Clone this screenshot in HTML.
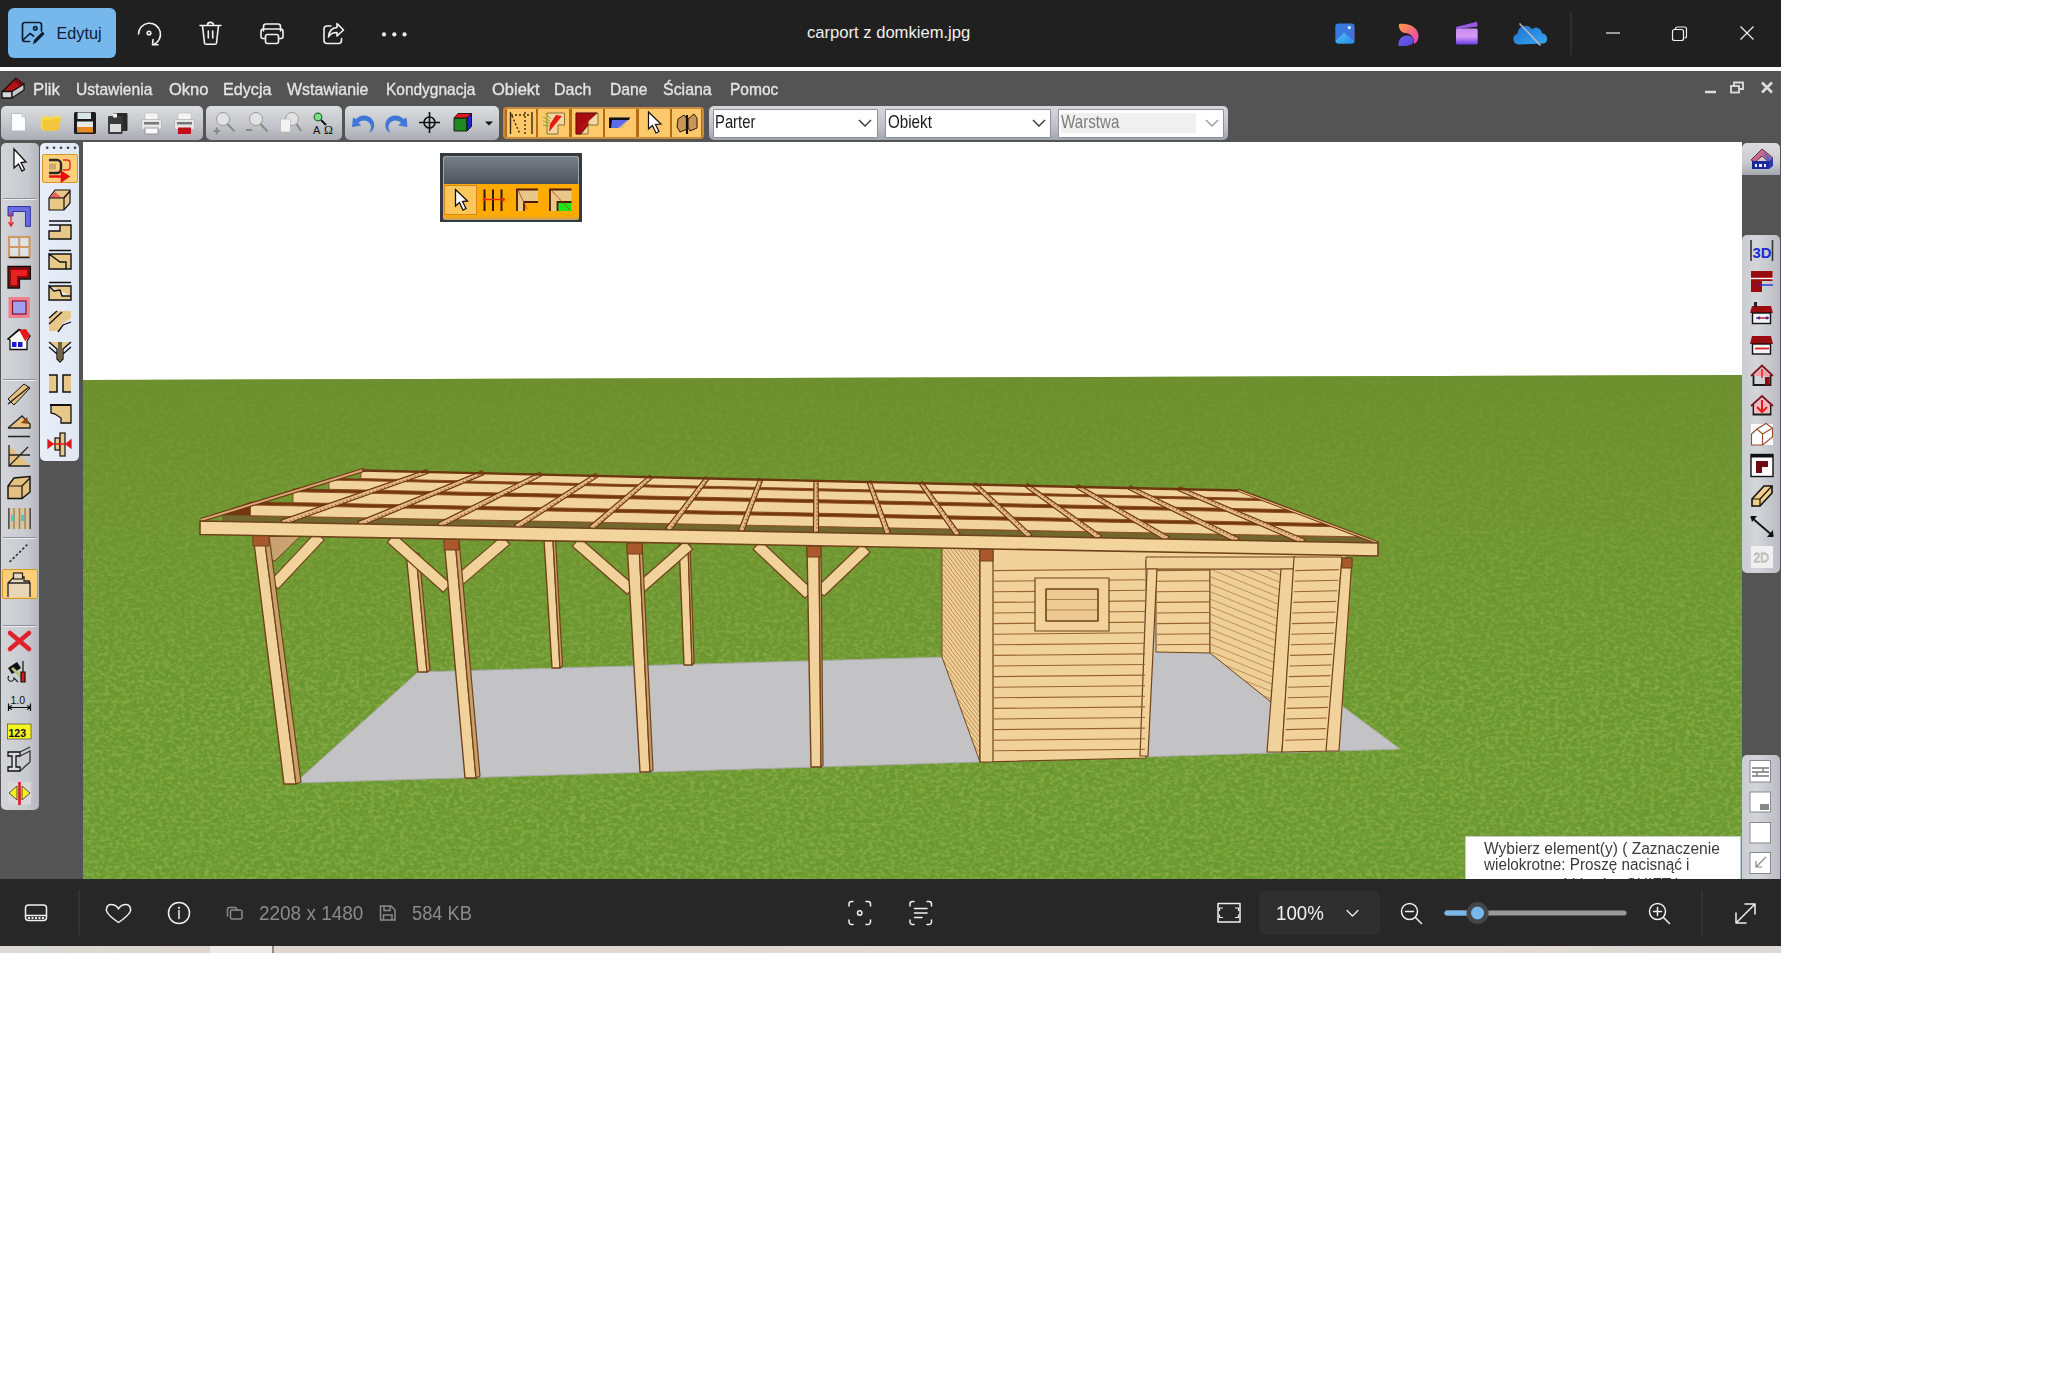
<!DOCTYPE html>
<html><head><meta charset="utf-8">
<style>
*{margin:0;padding:0;box-sizing:border-box}
html,body{width:2048px;height:1374px;overflow:hidden;background:#fff;font-family:"Liberation Sans",sans-serif}
.a{position:absolute}
svg{position:absolute;overflow:visible}
#title{left:0;top:0;width:1781px;height:66.8px;background:#202020}
#menu{left:0;top:71px;width:1781px;height:36px;background:#545454}
#tb{left:0;top:107px;width:1781px;height:35px;background:#545454}
#canvas{left:83px;top:142px;width:1659px;height:737px;background:#fff;overflow:hidden}
#lbar{left:0;top:142px;width:83px;height:737px;background:#545454}
#rbar{left:1742px;top:142px;width:39px;height:737px;background:#545454}
#status{left:0;top:879px;width:1781px;height:67px;background:#272727}
#strip{left:0;top:946px;width:1781px;height:7px;background:linear-gradient(90deg,#dad9d4 0,#ddd6cf 200px,#e3d8cf 600px,#e6dbd2 1200px,#ddd9d6 1781px)}
.mi{position:absolute;top:80px;font-size:15.3px;color:#e6e6e6;white-space:nowrap;letter-spacing:0}
.grp{position:absolute;top:106px;height:34px;border-radius:5px;background:linear-gradient(#dcdde0,#c4c6cb 55%,#a9acb3)}
.combo{position:absolute;top:109px;height:29px;background:#fff;border:1px solid #9a9ea6;font-size:15px;color:#222;padding:5px 0 0 4px;white-space:nowrap}
.col{position:absolute;border-radius:5px}
.st{position:absolute;font-size:18.7px;color:#8c8c8c;top:901px;white-space:nowrap}
</style></head><body>
<!-- ===== Photos title bar ===== -->
<div id="title" class="a"></div>
<div class="a" style="left:8px;top:8px;width:108px;height:50px;border-radius:6px;background:#76b7ec"></div>
<svg style="left:0;top:0" width="1" height="1">
  <g fill="none" stroke="#0c1d2e" stroke-width="1.7" stroke-linejoin="round" stroke-linecap="round">
    <path d="M29.5,41.5 H25 a2.5,2.5 0 0 1 -2.5,-2.5 V25 a2.5,2.5 0 0 1 2.5,-2.5 H39 a2.5,2.5 0 0 1 2.5,2.5 V31"/>
    <path d="M23,40 L30,33.5 L33.5,36"/>
    <circle cx="35.3" cy="28.3" r="1.7"/>
  </g>
  <path d="M33,44.5 L34,40 L41.5,32.5 a1.6,1.6 0 0 1 2.3,2.3 L36.3,42.3 Z" fill="#0c1d2e"/>
</svg>
<div class="a" style="left:56.5px;top:23.5px;font-size:16.2px;color:#0c2035">Edytuj</div>
<svg style="left:0;top:0" width="1" height="1">
  <g fill="none" stroke="#f2f2f2" stroke-width="1.6" stroke-linecap="round" stroke-linejoin="round">
    <path d="M138.5,34 A11,11 0 1 1 153.5,44.5"/>
    <path d="M153,39.5 L152.5,44.8 L158,44.8"/>
    <circle cx="149" cy="33" r="1.8"/>
    <!-- trash -->
    <path d="M200,25.5 H221 M202.5,25.5 L204.5,43 a1.5,1.5 0 0 0 1.5,1.3 H215 a1.5,1.5 0 0 0 1.5,-1.3 L218.5,25.5 M207.5,25 a3,2.6 0 0 1 6,0"/>
    <path d="M208.3,31 V38 M212.7,31 V38"/>
    <!-- printer -->
    <path d="M263.5,31 V26.5 a2.5,2.5 0 0 1 2.5,-2.5 H278 a2.5,2.5 0 0 1 2.5,2.5 V31"/>
    <path d="M264.5,38.5 H263 a2,2 0 0 1 -2,-2 V31.5 a2.5,2.5 0 0 1 2.5,-2.5 H280.5 a2.5,2.5 0 0 1 2.5,2.5 V36.5 a2,2 0 0 1 -2,2 H279.5"/>
    <rect x="265.5" y="34.5" width="13" height="9" rx="2"/>
    <!-- share -->
    <path d="M331,26 H327 a3,3 0 0 0 -3,3 V40.5 a3,3 0 0 0 3,3 H338.5 a3,3 0 0 0 3,-3 V38.5"/>
    <path d="M337,23.5 L343.5,30 L337,36 V32.5 C333,32.5 330,34 328.5,37 C329,31 332.5,27.8 337,27.5 Z"/>
  </g>
  <g fill="#f2f2f2"><circle cx="384" cy="34.4" r="2.1"/><circle cx="394.3" cy="34.4" r="2.1"/><circle cx="404.5" cy="34.4" r="2.1"/></g>
</svg>
<div class="a" style="left:807px;top:23px;font-size:16.6px;color:#f0f0f0;white-space:nowrap">carport z domkiem.jpg</div>
<svg style="left:0;top:0" width="1" height="1">
  <defs>
    <linearGradient id="ph1" x1="0" y1="0" x2="1" y2="1"><stop offset="0" stop-color="#2f7fe0"/><stop offset="1" stop-color="#4f6ad8"/></linearGradient>
    <linearGradient id="ph2" x1="0" y1="0" x2="1" y2="1"><stop offset="0" stop-color="#4cc3f4"/><stop offset="1" stop-color="#2a8ae6"/></linearGradient>
    <linearGradient id="ds1" x1="0" y1="0" x2="1" y2="1"><stop offset="0" stop-color="#ff9a3c"/><stop offset="1" stop-color="#e83cc0"/></linearGradient>
    <linearGradient id="ds2" x1="0" y1="0" x2="1" y2="1"><stop offset="0" stop-color="#7a5cf0"/><stop offset="1" stop-color="#4a4ad8"/></linearGradient>
    <linearGradient id="cc1" x1="0" y1="0" x2="0" y2="1"><stop offset="0" stop-color="#c88bf0"/><stop offset="0.5" stop-color="#d59af5"/><stop offset="1" stop-color="#6a3ee6"/></linearGradient>
    <linearGradient id="od1" x1="0" y1="0" x2="1" y2="1"><stop offset="0" stop-color="#1c6fd0"/><stop offset="1" stop-color="#38a8f0"/></linearGradient>
  </defs>
  <rect x="1335.3" y="23.5" width="19.3" height="19.9" rx="3" fill="url(#ph1)"/>
  <path d="M1335.5,41 L1344,32.5 L1354.5,41.5 V40.8 a2.6,2.6 0 0 1 -2.6,2.6 H1338 a2.6,2.6 0 0 1 -2.5,-2.4Z" fill="url(#ph2)"/>
  <circle cx="1349.3" cy="27.6" r="1.6" fill="#e8f4ff"/>
  <path d="M1399,24 C1410,22.5 1418.5,28 1418.5,36 C1418.5,40 1416.5,43 1414,44 C1415,38 1411,33.5 1405,33 C1401,32.5 1398.5,29 1399,24Z" fill="url(#ds1)"/>
  <path d="M1398.5,46 C1398,39 1402,35.5 1407,35.5 C1411.5,35.5 1414.5,38.5 1413.5,42.5 C1412,45.5 1405,46.5 1398.5,46Z" fill="url(#ds2)"/>
  <path d="M1456,27 L1477,21.8 L1477.6,26.5 L1456.5,29Z" fill="#9a5ae8"/>
  <rect x="1456" y="28.5" width="21.7" height="16" rx="1.5" fill="url(#cc1)"/>
  <path d="M1518.5,44.5 a5.5,5.5 0 0 1 -1,-10.8 a8,8 0 0 1 14.5,-4.5 a6,6 0 0 1 10,4.2 a5.2,5.2 0 0 1 1.8,10 Z" fill="url(#od1)"/>
  <line x1="1519.5" y1="23.5" x2="1540.5" y2="45.5" stroke="#b8b8b8" stroke-width="1.6"/>
  <line x1="1571" y1="11" x2="1571" y2="55" stroke="#3c3c3c" stroke-width="1"/>
  <g stroke="#f0f0f0" stroke-width="1.2" fill="none">
    <line x1="1606" y1="33" x2="1620" y2="33"/>
    <path d="M1675.5,29 a2,2 0 0 1 2,-2 h7 a2,2 0 0 1 2,2 v7 a2,2 0 0 1 -2,2"/>
    <rect x="1672.5" y="29.5" width="11" height="11" rx="2"/>
    <path d="M1740.5,26.5 L1753.5,39.5 M1753.5,26.5 L1740.5,39.5"/>
  </g>
</svg>


<!-- ===== App menu ===== -->
<div id="menu" class="a"></div>
<div class="a" style="left:33.4px;top:81.2px;font-size:17.39px;line-height:1;white-space:nowrap;color:#e4e4e4;transform:scaleX(0.961);transform-origin:0 0;-webkit-text-stroke:0.35px #e4e4e4;">Plik</div>
<div class="a" style="left:76.4px;top:81.2px;font-size:17.39px;line-height:1;white-space:nowrap;color:#e4e4e4;transform:scaleX(0.899);transform-origin:0 0;-webkit-text-stroke:0.35px #e4e4e4;">Ustawienia</div>
<div class="a" style="left:168.5px;top:81.2px;font-size:17.39px;line-height:1;white-space:nowrap;color:#e4e4e4;transform:scaleX(0.951);transform-origin:0 0;-webkit-text-stroke:0.35px #e4e4e4;">Okno</div>
<div class="a" style="left:223.0px;top:81.2px;font-size:17.39px;line-height:1;white-space:nowrap;color:#e4e4e4;transform:scaleX(0.929);transform-origin:0 0;-webkit-text-stroke:0.35px #e4e4e4;">Edycja</div>
<div class="a" style="left:286.5px;top:81.2px;font-size:17.39px;line-height:1;white-space:nowrap;color:#e4e4e4;transform:scaleX(0.917);transform-origin:0 0;-webkit-text-stroke:0.35px #e4e4e4;">Wstawianie</div>
<div class="a" style="left:386.1px;top:81.2px;font-size:17.39px;line-height:1;white-space:nowrap;color:#e4e4e4;transform:scaleX(0.890);transform-origin:0 0;-webkit-text-stroke:0.35px #e4e4e4;">Kondygnacja</div>
<div class="a" style="left:491.5px;top:81.2px;font-size:17.39px;line-height:1;white-space:nowrap;color:#e4e4e4;transform:scaleX(0.950);transform-origin:0 0;-webkit-text-stroke:0.35px #e4e4e4;">Obiekt</div>
<div class="a" style="left:554.0px;top:81.2px;font-size:17.39px;line-height:1;white-space:nowrap;color:#e4e4e4;transform:scaleX(0.923);transform-origin:0 0;-webkit-text-stroke:0.35px #e4e4e4;">Dach</div>
<div class="a" style="left:610.1px;top:81.2px;font-size:17.39px;line-height:1;white-space:nowrap;color:#e4e4e4;transform:scaleX(0.900);transform-origin:0 0;-webkit-text-stroke:0.35px #e4e4e4;">Dane</div>
<div class="a" style="left:662.7px;top:81.2px;font-size:17.39px;line-height:1;white-space:nowrap;color:#e4e4e4;transform:scaleX(0.917);transform-origin:0 0;-webkit-text-stroke:0.35px #e4e4e4;">Ściana</div>
<div class="a" style="left:729.6px;top:81.2px;font-size:17.39px;line-height:1;white-space:nowrap;color:#e4e4e4;transform:scaleX(0.895);transform-origin:0 0;-webkit-text-stroke:0.35px #e4e4e4;">Pomoc</div>
<svg style="left:0;top:0" width="1" height="1">
  <path d="M3,91 L16,78 L24,84 L11,97Z" fill="#b0141a" stroke="#1a0a0a" stroke-width="1.2"/>
  <path d="M16,78 L24,84 L23.5,88 L15,82Z" fill="#7a0d10"/>
  <path d="M2,91.5 L12,91.5 L12,98 L2,98Z" fill="#d8d8dc" stroke="#111" stroke-width="1.3"/>
  <path d="M12,91.5 L24,84 L24,90 L12,98Z" fill="#c8c8cc" stroke="#111" stroke-width="1.2"/>
  <g stroke="#dcdcdc" fill="none">
    <line x1="1705" y1="92" x2="1716" y2="92" stroke-width="2.5"/>
    <rect x="1731" y="86" width="8" height="6.5" stroke-width="1.8"/>
    <path d="M1734,86 V82.5 H1743 V89 H1739" stroke-width="1.8"/>
    <path d="M1762,82.5 L1772,92.5 M1772,82.5 L1762,92.5" stroke-width="2.6"/>
  </g>
</svg>
<div id="tb" class="a"></div>
<div class="grp" style="left:1px;width:202px"></div>
<div class="grp" style="left:206px;width:136px"></div>
<div class="grp" style="left:345px;width:154px"></div>
<div class="a" style="left:503px;top:106.5px;width:201px;height:32.5px;border-radius:4px;background:#c98a3e"></div>
<div class="a" style="left:505px;top:108.5px;width:197px;height:28.5px;background:#b56c12"></div>
<div class="a" style="left:506.5px;top:109px;width:29.3px;height:27.5px;background:#fdc96a"></div>
<div class="a" style="left:538.3px;top:109px;width:31.0px;height:27.5px;background:#fdc96a"></div>
<div class="a" style="left:571.8px;top:109px;width:31.0px;height:27.5px;background:#fdc96a"></div>
<div class="a" style="left:605.3px;top:109px;width:31.0px;height:27.5px;background:#fdc96a"></div>
<div class="a" style="left:638.8px;top:109px;width:31.0px;height:27.5px;background:#fdc96a"></div>
<div class="a" style="left:672.3px;top:109px;width:28.7px;height:27.5px;background:#fdc96a"></div>
<div class="grp" style="left:709px;width:519px;background:linear-gradient(#d5d7db,#bfc2c8 60%,#9fa3ab)"></div>
<div class="a" style="left:712.5px;top:109px;width:165.0px;height:28.5px;background:#fff;border:1px solid #8d9199;border-radius:1px"></div>
<div class="a" style="left:885px;top:109px;width:166px;height:28.5px;background:#fff;border:1px solid #8d9199;border-radius:1px"></div>
<div class="a" style="left:1057.5px;top:109px;width:166.5px;height:28.5px;background:#fff;border:1px solid #8d9199;border-radius:1px"></div>
<div class="a" style="left:1061px;top:113px;width:135px;height:20px;background:#f0f0f0"></div>
<div class="a" style="left:715.1px;top:113.0px;font-size:18.84px;line-height:1;white-space:nowrap;color:#1a1a1a;transform:scaleX(0.787);transform-origin:0 0;">Parter</div>
<div class="a" style="left:887.6px;top:113.0px;font-size:18.84px;line-height:1;white-space:nowrap;color:#1a1a1a;transform:scaleX(0.806);transform-origin:0 0;">Obiekt</div>
<div class="a" style="left:1061.1px;top:113.0px;font-size:18.84px;line-height:1;white-space:nowrap;color:#7c7c7c;transform:scaleX(0.805);transform-origin:0 0;">Warstwa</div>
<svg style="left:0;top:0" width="1" height="1">
<g fill="none" stroke-width="1.4">
<path d="M859,120 L865,126 L871,120" stroke="#333"/>
<path d="M1033,120 L1039,126 L1045,120" stroke="#333"/>
<path d="M1206,120 L1212,126 L1218,120" stroke="#9a9a9a"/>
</g>
<!-- new doc -->
<path d="M11.5,113.5 H22 L25.5,117 V131 H11.5Z" fill="#fbfdff" stroke="#aab4c4" stroke-width="0.8"/>
<path d="M22,113.5 V117 H25.5" fill="#d8e0ee" stroke="#aab4c4" stroke-width="0.6"/>
<!-- folder -->
<path d="M41,118 L45,116 L50,117 L58,115.5 L61,118 L59,130 L44,131 L40.5,128Z" fill="#f6d94a"/>
<path d="M42,121 L61,118 L59,130 L44,131Z" fill="#f2c53a"/>
<!-- save -->
<rect x="74" y="112" width="22" height="22" rx="1.5" fill="#1b1b1b"/>
<rect x="77.5" y="112.5" width="13.5" height="6.5" fill="#d8e6ea"/>
<rect x="77" y="121.5" width="16" height="5.5" fill="#e8e8e8"/>
<rect x="77" y="127" width="16" height="5.5" fill="#e58a25"/>
<!-- save all -->
<rect x="113" y="113" width="14.5" height="18" rx="1" fill="#2a2a2a"/>
<rect x="108" y="116" width="14.5" height="18" rx="1" fill="#3a3a3a"/>
<rect x="113" y="113.5" width="4" height="4" fill="#eee"/>
<rect x="110" y="124" width="11" height="8" fill="#dcdcdc"/>
<!-- printers -->
<g>
<rect x="145" y="113" width="13" height="7" fill="#f4f4f4" stroke="#bbb" stroke-width="0.6"/>
<rect x="141.5" y="119.5" width="20" height="10" rx="1.5" fill="#e6e6e6" stroke="#aaa" stroke-width="0.6"/>
<rect x="144" y="122" width="15" height="2.5" fill="#777"/>
<rect x="145" y="128" width="13" height="6" fill="#fafafa" stroke="#888" stroke-width="0.8"/>
<rect x="178" y="113" width="13" height="7" fill="#f4f4f4" stroke="#bbb" stroke-width="0.6"/>
<rect x="174.5" y="119.5" width="20" height="10" rx="1.5" fill="#e6e6e6" stroke="#aaa" stroke-width="0.6"/>
<rect x="177" y="122" width="15" height="2.5" fill="#777"/>
<rect x="178" y="127.5" width="13" height="6.5" fill="#c0101a"/>
</g>
<!-- zoom icons -->
<g fill="#e2e2e2" stroke="#9a9a9a" stroke-width="1">
<circle cx="223" cy="119" r="6.5"/><circle cx="256" cy="119" r="6.5"/><circle cx="292" cy="119" r="6.5"/>
</g>
<g stroke="#8a8a8a" stroke-width="2" fill="none">
<path d="M227.5,124 L234.5,131.5"/><path d="M260.5,124 L267.5,131.5"/><path d="M296.5,124 L301,131"/>
<path d="M213.5,131 H220 M216.8,127.5 V134.5"/><path d="M246,130 H252"/>
</g>
<rect x="280.5" y="119" width="10" height="13" fill="#f2f2f2" stroke="#b0b0b0" stroke-width="0.6"/>
<circle cx="318" cy="117" r="3.8" fill="#7ee08a" stroke="#1f6a2a" stroke-width="1.2"/>
<path d="M321,120 L326,125" stroke="#111" stroke-width="2"/>
<text x="313" y="134" font-family="Liberation Sans" font-size="11" fill="#111">A</text>
<text x="324" y="134" font-family="Liberation Serif" font-size="12" fill="#111">Ω</text>
<!-- undo/redo -->
<path d="M353,117.5 L352,127 L361.5,125.5 L358.5,123 C362,119.5 367,120 369.5,123 C372,126 371,130.5 369,133 C374,131 375.5,125 373,120.5 C369.5,114.5 361,114 356,119Z" fill="#3f78d8"/>
<path d="M406.5,117.5 L407.5,127 L398,125.5 L401,123 C397.5,119.5 392.5,120 390,123 C387.5,126 388.5,130.5 390.5,133 C385.5,131 384,125 386.5,120.5 C390,114.5 398.5,114 403.5,119Z" fill="#3f78d8"/>
<!-- crosshair -->
<g stroke="#111" stroke-width="1.6" fill="none"><circle cx="429.5" cy="122.5" r="5.5"/><path d="M419,122.5 H440 M429.5,112 V133"/></g>
<!-- cube -->
<path d="M454,118 L467,118 L467,131 L454,131Z" fill="#1e8a22" stroke="#111" stroke-width="0.9"/>
<path d="M454,118 L458,113.5 L471.5,113.5 L467,118Z" fill="#e01818" stroke="#111" stroke-width="0.9"/>
<path d="M467,118 L471.5,113.5 L471.5,126.5 L467,131Z" fill="#2424c8" stroke="#111" stroke-width="0.9"/>
<path d="M485,121.5 L493,121.5 L489,125.5Z" fill="#111"/>
<!-- orange icons -->
<g stroke="#3a2a10" stroke-width="1.4" fill="none">
<path d="M510.5,112 V134 M532,112 V134"/>
<path d="M511,115 H531" stroke-dasharray="2 2"/>
<path d="M525,112 V134" stroke-dasharray="2 2"/>
<path d="M512,116 L520,134" stroke-dasharray="2 2"/>
</g>
<g>
<path d="M547,113 L564.5,113 L564.5,125 L558,125 L558,134 L547,134Z" fill="#f4d6a0" stroke="#7a6a30" stroke-width="0.9"/>
<path d="M549,132 L562,116 L556,115 L550,124Z" fill="#e81a10"/>
<path d="M543,117 L550,121 M543,121 L550,123 M543,125 L549,126 M545,113 L551,119" stroke="#9aaa20" stroke-width="1"/>
</g>
<g>
<path d="M576,113 L598,113 L598,125 L588,125 L588,134 L576,134Z" fill="#f4d6a0" stroke="#7a6a30" stroke-width="0.9"/>
<path d="M576,113 L597,113 L588,121 L588,125 L581,134 L576,134Z" fill="#a80c10" stroke="#5a0a0a" stroke-width="0.8"/>
<path d="M579,131 L595,115 L588,121 L585,124Z" fill="#f21c14"/>
</g>
<g>
<path d="M612,117 L631,117 L622,128 L610,128Z" fill="#c8b890"/>
<path d="M610,119 L629,119 L618,128 L610,128Z" fill="#5a6ae8"/>
<path d="M609,117.5 L630,117.5 L629,120 L612,120 L611,128 L609,128Z" fill="#111"/>
</g>
<path d="M648.5,112 L648.5,129 L652.5,125.5 L656,133 L659,131.5 L655.5,124.5 L661,124Z" fill="#fff" stroke="#111" stroke-width="1.2"/>
<g>
<path d="M678,119 L684,115 L687,119 L687,129 L680,132 L677,127Z" fill="#c8955a" stroke="#2a1a0a" stroke-width="1"/>
<path d="M688,119 L694,114 L697,118 L697,128 L690,131 L688,127Z" fill="#c8955a" stroke="#2a1a0a" stroke-width="1"/>
<path d="M687,115 V134" stroke="#111" stroke-width="2.2"/>
</g>
</svg>

<div id="lbar" class="a"></div>
<div class="col" style="left:1px;top:142.5px;width:37.5px;height:667px;background:linear-gradient(90deg,#d3d5d9,#c6c9ce 70%,#b3b6bc);border-radius:5px 5px 5px 5px"></div>
<div class="a" style="left:3px;top:198px;width:33px;height:1px;background:#8e9196"></div>
<div class="a" style="left:3px;top:199px;width:33px;height:1px;background:#eceef0"></div>
<div class="a" style="left:3px;top:378.5px;width:33px;height:1px;background:#8e9196"></div>
<div class="a" style="left:3px;top:379.5px;width:33px;height:1px;background:#eceef0"></div>
<div class="a" style="left:3px;top:536.5px;width:33px;height:1px;background:#8e9196"></div>
<div class="a" style="left:3px;top:537.5px;width:33px;height:1px;background:#eceef0"></div>
<div class="a" style="left:3px;top:624.5px;width:33px;height:1px;background:#8e9196"></div>
<div class="a" style="left:3px;top:625.5px;width:33px;height:1px;background:#eceef0"></div>
<div class="a" style="left:2.2px;top:568.6px;width:36px;height:30px;background:#fdcf78;border:1px solid #d9962e;border-radius:2px"></div>
<div class="col" style="left:40px;top:142.5px;width:39.2px;height:318px;background:linear-gradient(90deg,#e9eff9,#dfe7f3);border-radius:5px"></div>
<div class="a" style="left:42.4px;top:154px;width:35.2px;height:29.2px;background:#fdcf78;border:1px solid #d9962e;border-radius:2px"></div>
<svg style="left:0;top:0" width="1" height="1">
<g fill="#3b3f48"><circle cx="47.2" cy="147.7" r="1.3"/><circle cx="54" cy="147.7" r="1.3"/><circle cx="61" cy="147.7" r="1.3"/><circle cx="68" cy="147.7" r="1.3"/><circle cx="75" cy="147.7" r="1.3"/></g>
<!-- col1 icons -->
<path d="M14,149 L14,168 L18.5,164 L22,171 L24.5,169.5 L21,162.5 L26,162Z" fill="#fff" stroke="#111" stroke-width="1.3"/>
<path d="M8,206.5 H30.4 V226.4 H25.5 V211.5 H13 V216 H8Z" fill="#6a6ae6" stroke="#1a1a8a" stroke-width="0.8"/>
<path d="M11,213 V225 M8.5,222 L11,226 L13.5,222" stroke="#e82020" stroke-width="1.3" fill="none"/>
<rect x="9" y="237" width="20.5" height="20" fill="#dde3ea" stroke="#d09a66" stroke-width="2.2"/>
<path d="M19.2,237 V257 M9,247 H29.5" stroke="#d09a66" stroke-width="2"/>
<path d="M9,257.5 H29.5" stroke="#222" stroke-width="1.4"/>
<path d="M8,266.5 H30.4 V279 H19.5 V288 H8Z" fill="#8a0a0e" stroke="#111" stroke-width="1.3"/>
<path d="M11,285 L11,270 L27,270 L27,276 L17,276 L17,285Z" fill="#e82020"/>
<rect x="8.5" y="297" width="21.5" height="21" fill="#f08090"/>
<rect x="12.5" y="301" width="13.5" height="13" fill="#a0a0f0" stroke="#8a1030" stroke-width="1.2"/>
<path d="M8,339 L19,330 L26,331 L30,336 L27,341 V349.5 H10 V340Z" fill="#fff" stroke="#111" stroke-width="1.3"/>
<path d="M8,339 L19,329.5 L30,336" fill="none" stroke="#111" stroke-width="1.5"/>
<path d="M19,330 L26,329 L30,336 L25,341 Z" fill="#e81818"/>
<rect x="12" y="342" width="4.5" height="5" fill="#1818d0"/><rect x="18" y="342" width="4.5" height="5" fill="#1818d0"/>
<!-- col1 group 3 -->
<path d="M8,399 L24,384 L30,388 L14,405Z" fill="#e6c080" stroke="#111" stroke-width="1"/>
<path d="M8,404 L29,387" stroke="#222" stroke-width="1.4"/>
<path d="M8,436.5 H30 M8,428 H30 L30,424 L22,416 L8,428" fill="#e6c080" stroke="#222" stroke-width="1.3"/>
<path d="M21,423 L27,417 L29,424Z" fill="#8a4a10"/>
<path d="M9,445 V466 H30 M9,455 H30 M9,466 L28,447" stroke="#222" stroke-width="1.3" fill="#e6c080"/>
<path d="M8,486 L14,478 L30,476.5 V492 L22,498.5 H8Z" fill="#e6c080" stroke="#111" stroke-width="1.4"/>
<path d="M8,486 H22 V498.5 M22,486 L30,478" fill="none" stroke="#111" stroke-width="1.2"/>
<g stroke="#222" stroke-width="1.4"><path d="M9,508 V529 M14,508 V529 M19.5,508 V529 M25,508 V529 M30,508 V529"/></g>
<rect x="9.5" y="508" width="20" height="21" fill="#e6c080" opacity="0.6"/>
<rect x="11" y="515" width="3" height="6" fill="#3ad0d0"/><rect x="21" y="515" width="3" height="6" fill="#3ad0d0"/>
<path d="M9.5,562 L29,543" stroke="#2a3040" stroke-width="1.6" stroke-dasharray="2.5 2"/>
<path d="M8,597 V583 L14,577 H24 L24,581 H29 L30,583 V597 M8,583 H30" fill="#e8d6b8" stroke="#222" stroke-width="1.3"/>
<rect x="13.5" y="573" width="9" height="6" fill="#e8d6b8" stroke="#222" stroke-width="1.2"/>
<!-- col1 group 4 -->
<path d="M10,633 L29,649 M29,633 L10,649" stroke="#e0202a" stroke-width="4.5" stroke-linecap="round"/>
<path d="M8,668 L17,662 L21,668 L12,674Z" fill="#111"/>
<path d="M12,668 L26,681" stroke="#b8c070" stroke-width="3"/>
<path d="M23,661 V672 M21,672 H25 V682 H21Z" stroke="#111" fill="#e01818" stroke-width="1.2"/>
<path d="M9,676 a3,3 0 1 0 5,2 L18,682" stroke="#222" fill="none" stroke-width="1.1"/>
<text x="10.5" y="704" font-family="Liberation Sans" font-size="10.5" fill="#111">1.0</text>
<path d="M8,707.5 H31 M8.5,703.5 V711 M30.5,703.5 V711 M8,707.5 L12,705.5 M8,707.5 L12,709.5 M31,707.5 L27,705.5 M31,707.5 L27,709.5" stroke="#111" stroke-width="1.2" fill="none"/>
<rect x="7.5" y="724" width="23.5" height="15" fill="#f4f420" stroke="#333" stroke-width="0.6"/>
<text x="8.5" y="737" font-family="Liberation Sans" font-size="10.5" font-weight="bold" fill="#111">123</text>
<path d="M8,752 H20 V756 H16 V767 H20 V771 H8 V767 H12 V756 H8Z" fill="#dcdcdc" stroke="#111" stroke-width="1.3"/>
<path d="M20,752 L30,747 M20,771 L30,762 M20,756 L30,751 V762" fill="none" stroke="#333" stroke-width="1.3"/>
<rect x="8" y="782" width="23" height="22.5" fill="#d8d8d8"/>
<path d="M17,786 L9,793 L17,800Z M22,786 L30,793 L22,800Z" fill="#f4f020" stroke="#333" stroke-width="0.8"/>
<path d="M19.5,782 V805" stroke="#e01820" stroke-width="2.6"/>
<!-- col2 icons -->
<path d="M49,160 H57 a4,4 0 0 1 4,4 V169 a4,4 0 0 1 -4,4 H49" fill="none" stroke="#2a2a2a" stroke-width="2.4"/>
<path d="M49,163.5 H56 V169.5 H49Z" fill="#c8aa70"/>
<path d="M63,160 H67 a3,3 0 0 1 3,3 V167 a3,3 0 0 1 -3,3 H63" fill="none" stroke="#e82020" stroke-width="1.3"/>
<path d="M49,176.5 H65 M62,172.5 L68,176.5 L62,180.5Z" stroke="#e81010" stroke-width="2.6" fill="#e81010"/>
<path d="M49,198 L55,190 H70 V203 L64,210 H49Z" fill="#e8c888" stroke="#111" stroke-width="1.2"/>
<path d="M49,198 L55,192 L62,198 L70,190 L64,198Z" fill="#f06060"/>
<path d="M49,198 H64 V210 M64,198 L70,191" fill="none" stroke="#111" stroke-width="1.2"/>
<path d="M49,221 H71 M49,225 H71 V239 H49 V231 H60 V225" fill="#e8c888" stroke="#111" stroke-width="1.4"/>
<path d="M49,250.5 H71 M49,254 H71 V269 H49 V254 L60,262 L66,262 V269" fill="#e8c888" stroke="#111" stroke-width="1.4"/>
<path d="M49,282.5 H71 M49,286 H71 V300 H49 V286 L54,291 L60,290 L62,296 H71" fill="#e8c888" stroke="#111" stroke-width="1.4"/>
<path d="M49,318 L56,311 H71 V318 L62,324 L59,331 H49Z" fill="#e8c888"/>
<path d="M49,318 L57,311 M49,324 L62,312 M71,322 L63,325 L58,332" stroke="#111" stroke-width="1.3" fill="none"/>
<path d="M49,342 L57,349 V359 L60,362 L63,359 V349 L71,342 M49,347 L57,354 M71,347 L63,354" fill="#e8c888" stroke="#111" stroke-width="1.3"/>
<path d="M59,342 V360 M61,342 V360" stroke="#111" stroke-width="1.1"/>
<path d="M49,375 H57 V392 H49 M71,375 H63 V392 H71" fill="#e8c888" stroke="#111" stroke-width="1.5"/>
<path d="M51,405 H71 V423 H61 V418 L55,414 L51,413Z" fill="#e8c888" stroke="#111" stroke-width="1.3"/>
<path d="M50,405 H71" stroke="#111" stroke-width="2"/>
<rect x="55" y="438" width="5" height="12" fill="#e8c888" stroke="#111" stroke-width="1.2"/>
<rect x="60" y="433" width="5" height="23" fill="#e8c888" stroke="#111" stroke-width="1.2"/>
<path d="M48,444 H71 M48,440 L53,444 L48,448Z M71,440 L66,444 L71,448Z" stroke="#e01818" stroke-width="1.3" fill="#e01818"/>
</svg>

<div id="rbar" class="a"></div>
<div class="col" style="left:1742.3px;top:142.8px;width:37.8px;height:32.5px;background:linear-gradient(#dadcdf,#c9cbcf 60%,#a4a7ad);border-radius:5px 5px 0 0"></div>
<div class="col" style="left:1742.3px;top:234.7px;width:37.8px;height:338.7px;background:linear-gradient(90deg,#c9ccd1,#d3d5d9 40%,#b9bcc2);border-radius:5px 5px 5px 5px"></div>
<div class="col" style="left:1742.3px;top:755px;width:37.8px;height:130px;background:linear-gradient(90deg,#c9ccd1,#d3d5d9 40%,#b9bcc2);border-radius:5px 5px 0 0"></div>
<svg style="left:0;top:0" width="1" height="1">
<!-- top house -->
<path d="M1751,160 L1762,149 L1773,158 L1769,162 L1762,156 L1755,162Z" fill="#c86a90" stroke="#6a2a40" stroke-width="1"/>
<path d="M1763,152 L1772,159 L1768,161" fill="#4a6ad8"/>
<rect x="1752" y="161" width="17" height="8" fill="#1a2a9a"/>
<path d="M1769,161 L1773,158 V166 L1769,169Z" fill="#2a3aa8"/>
<g fill="#e8e8f8"><rect x="1755" y="164" width="2" height="3"/><rect x="1759" y="164" width="3" height="3"/><rect x="1764" y="164" width="2" height="3"/></g>
<!-- 3D -->
<path d="M1751,240 V261 M1772.5,240 V261" stroke="#333" stroke-width="1.6"/>
<text x="1752.5" y="257.5" font-family="Liberation Sans" font-weight="bold" font-size="15.5" fill="#1a2ad8" textLength="19" lengthAdjust="spacingAndGlyphs">3D</text>
<!-- red F -->
<path d="M1751,271 H1772.5 V281 H1762 V292 H1751Z" fill="#9a0c10"/>
<path d="M1750,278.5 H1773" stroke="#fff" stroke-width="1.4"/>
<path d="M1758,285 H1773" stroke="#2a2ae0" stroke-width="1.4"/>
<!-- houses -->
<path d="M1750,313 L1752,306 H1771 L1773,313Z" fill="#9a0c10"/>
<rect x="1754" y="302" width="3" height="5" fill="#222"/>
<rect x="1752.5" y="313" width="18" height="10.5" fill="#f4f4f8" stroke="#111" stroke-width="1.4"/>
<path d="M1756,318 H1769" stroke="#d02020" stroke-width="1.5"/>
<circle cx="1759" cy="318" r="1.4" fill="#2030c0"/><circle cx="1767" cy="318" r="1.4" fill="#2030c0"/>
<path d="M1750,344 L1752,336 H1771 L1773,344Z" fill="#9a0c10"/>
<rect x="1752.5" y="344" width="18" height="10" fill="#f4f4f8" stroke="#111" stroke-width="1.4"/>
<path d="M1755,348.5 H1769" stroke="#e02020" stroke-width="1.8"/>
<g fill="none" stroke-width="1.8">
<path d="M1751,376 L1762,365.5 L1773,376" stroke="#8a1018"/>
<path d="M1753.5,375 V385 H1770.5 V375" stroke="#1a1a1a"/>
</g>
<path d="M1754,376 L1762,368 L1770,376Z" fill="#f8a0a8"/>
<rect x="1765" y="377" width="4.5" height="8" fill="#8a0a0e"/>
<path d="M1762,369 V378" stroke="#e82020" stroke-width="1.5"/>
<g fill="none" stroke-width="1.8">
<path d="M1751,406 L1762,396 L1773,406" stroke="#8a1018"/>
<path d="M1753.5,405 V414.5 H1770.5 V405" stroke="#1a1a1a"/>
</g>
<path d="M1754,406 L1762,398.5 L1770,406 V413 H1754Z" fill="#f8b8c0"/>
<path d="M1762,400 V412 M1757,407 L1762,412 L1767,407" stroke="#e81818" stroke-width="2" fill="none"/>
<rect x="1751" y="424" width="22" height="21" fill="#fff"/>
<path d="M1751.5,445 V434 L1757,429 L1762.5,434 V445Z M1757,429 L1766,423.5 L1772.5,428 L1762.5,434 M1762.5,445 L1772.5,437 V428" fill="none" stroke="#9a4a2a" stroke-width="1.1"/>
<rect x="1751" y="454.5" width="22" height="22" fill="#fff" stroke="#111" stroke-width="1.4"/>
<rect x="1751" y="454.5" width="22" height="3" fill="#111"/>
<path d="M1756,461 H1768 V467 H1762 V473 H1756Z" fill="#700a0e"/>
<path d="M1752,499 L1764,486 H1772 V493 L1760,506 H1752Z" fill="#f0d088" stroke="#111" stroke-width="1.6"/>
<path d="M1752,499 H1760 V506 M1760,499 L1772,486" fill="none" stroke="#111" stroke-width="1.2"/>
<path d="M1751,517 L1773,536" stroke="#111" stroke-width="1.8"/>
<path d="M1750.5,516 L1757,516 L1752,522Z M1773.5,537 L1767,537 L1773,530Z" fill="#111"/>
<rect x="1751" y="546" width="22" height="22" fill="#f0f0f0"/>
<text x="1753.5" y="562" font-family="Liberation Sans" font-size="12" fill="#fff" stroke="#b8b8b8" stroke-width="0.8">2D</text>
<!-- bottom panel -->
<g fill="#fff" stroke="#888" stroke-width="1">
<rect x="1750" y="760.5" width="20.5" height="21.5"/>
<rect x="1750" y="792" width="20.5" height="20"/>
<rect x="1750" y="822.5" width="20.5" height="20.5"/>
<rect x="1750" y="852.5" width="20.5" height="21"/>
</g>
<path d="M1752,768 H1769 M1752,772 H1769 M1752,776 H1769 M1757,772 V776 M1763,768 V772" stroke="#777" stroke-width="1.3"/>
<rect x="1760" y="804" width="9" height="6" fill="#888"/>
<path d="M1766,857 L1756,867 M1756,861 V867 H1762" stroke="#888" stroke-width="1.2" fill="none"/>
</svg>

<div id="canvas" class="a">
  <svg width="1659" height="737" viewBox="83 142 1659 737" style="position:absolute;left:0;top:0">
    <defs>
      <linearGradient id="grass" x1="0" y1="0" x2="0" y2="1">
        <stop offset="0" stop-color="#6d8f2e"/>
        <stop offset="0.35" stop-color="#6d952f"/>
        <stop offset="1" stop-color="#6a9931"/>
      </linearGradient>
    </defs>
      <linearGradient id="gfade" x1="0" y1="380" x2="0" y2="700" gradientUnits="userSpaceOnUse">
        <stop offset="0" stop-color="#6d8e2e" stop-opacity="0.85"/>
        <stop offset="0.5" stop-color="#6d942f" stop-opacity="0.45"/>
        <stop offset="1" stop-color="#6b9730" stop-opacity="0"/>
      </linearGradient>
      <filter id="gn" x="83" y="370" width="1659" height="510" filterUnits="userSpaceOnUse">
        <feTurbulence type="fractalNoise" baseFrequency="0.22 0.3" numOctaves="2" seed="7" result="n"/>
        <feColorMatrix in="n" type="matrix" values="0 0 0 0 0.54  0 0 0 0 0.74  0 0 0 0 0.22  2.2 0 0 0 -1.05" result="c"/>
        <feComposite in="c" in2="SourceGraphic" operator="in"/>
      </filter>
      <filter id="gd" x="83" y="370" width="1659" height="510" filterUnits="userSpaceOnUse">
        <feTurbulence type="fractalNoise" baseFrequency="0.2 0.26" numOctaves="2" seed="3" result="n"/>
        <feColorMatrix in="n" type="matrix" values="0 0 0 0 0.26  0 0 0 0 0.42  0 0 0 0 0.06  0 -4 0 0 2.05" result="c"/>
        <feComposite in="c" in2="SourceGraphic" operator="in"/>
      </filter>
    <polygon points="83,380 1742,375 1742,879 83,879" fill="url(#grass)"/>
    <polygon points="83,380 1742,375 1742,879 83,879" fill="#000" filter="url(#gn)" opacity="0.4"/>
    <polygon points="83,380 1742,375 1742,879 83,879" fill="#000" filter="url(#gd)" opacity="0.7"/>
    <polygon points="83,380 1742,375 1742,879 83,879" fill="url(#gfade)"/>
<polygon points="295.0,783.0 418.0,672.0 1264.0,648.0 1400.0,749.0" fill="#c3c3c6" stroke="#a9aaa8" stroke-width="1" stroke-linejoin="round"/>
<polygon points="406.0,553.0 416.0,553.0 427.0,672.0 418.0,672.0" fill="#f2d29b" stroke="#70421a" stroke-width="1.4" stroke-linejoin="round"/>
<polygon points="416.0,553.0 419.0,553.0 430.0,670.0 427.0,672.0" fill="#caa06a" stroke="#70421a" stroke-width="1.2" stroke-linejoin="round"/>
<polygon points="544.0,540.0 553.0,540.0 560.0,668.0 552.0,668.0" fill="#f2d29b" stroke="#70421a" stroke-width="1.4" stroke-linejoin="round"/>
<polygon points="553.0,540.0 555.5,540.0 562.5,666.0 560.0,668.0" fill="#caa06a" stroke="#70421a" stroke-width="1.2" stroke-linejoin="round"/>
<polygon points="679.0,544.0 688.0,544.0 692.0,665.0 684.0,665.0" fill="#f2d29b" stroke="#70421a" stroke-width="1.4" stroke-linejoin="round"/>
<polygon points="688.0,544.0 690.0,544.0 694.0,663.0 692.0,665.0" fill="#caa06a" stroke="#70421a" stroke-width="1.2" stroke-linejoin="round"/>
<polygon points="266.5,536.5 300.0,536.5 276.0,560.0 270.0,562.0" fill="#c9a271" stroke="#70421a" stroke-width="1" stroke-linejoin="round"/>
<polygon points="278.2,588.9 324.2,539.9 315.8,532.1 269.8,581.1" fill="#f2d29b" stroke="#70421a" stroke-width="1.2" stroke-linejoin="round"/>
<polygon points="387.2,542.3 443.2,592.3 450.8,583.7 394.8,533.7" fill="#f2d29b" stroke="#70421a" stroke-width="1.2" stroke-linejoin="round"/>
<polygon points="460.7,586.4 509.7,544.4 502.3,535.6 453.3,577.6" fill="#f2d29b" stroke="#70421a" stroke-width="1.2" stroke-linejoin="round"/>
<polygon points="572.2,546.3 627.2,594.3 634.8,585.7 579.8,537.7" fill="#f2d29b" stroke="#70421a" stroke-width="1.2" stroke-linejoin="round"/>
<polygon points="643.8,592.3 692.8,549.3 685.2,540.7 636.2,583.7" fill="#f2d29b" stroke="#70421a" stroke-width="1.2" stroke-linejoin="round"/>
<polygon points="753.1,549.2 805.1,598.2 812.9,589.8 760.9,540.8" fill="#f2d29b" stroke="#70421a" stroke-width="1.2" stroke-linejoin="round"/>
<polygon points="824.0,596.2 870.0,552.2 862.0,543.8 816.0,587.8" fill="#f2d29b" stroke="#70421a" stroke-width="1.2" stroke-linejoin="round"/>
<polygon points="253.0,535.0 264.0,535.0 296.0,784.0 284.0,784.0" fill="#f2d29b" stroke="#70421a" stroke-width="1.4" stroke-linejoin="round"/>
<polygon points="264.0,535.0 269.0,535.0 301.0,782.0 296.0,784.0" fill="#caa06a" stroke="#70421a" stroke-width="1.2" stroke-linejoin="round"/>
<polygon points="253.0,535.0 269.0,535.0 269.0,546.0 253.0,546.0" fill="#a9592b" stroke="#70421a" stroke-width="1" stroke-linejoin="round"/>
<polygon points="444.0,539.0 455.0,539.0 476.0,778.0 465.0,778.0" fill="#f2d29b" stroke="#70421a" stroke-width="1.4" stroke-linejoin="round"/>
<polygon points="455.0,539.0 459.0,539.0 480.0,776.0 476.0,778.0" fill="#caa06a" stroke="#70421a" stroke-width="1.2" stroke-linejoin="round"/>
<polygon points="444.0,539.0 459.0,539.0 459.0,550.0 444.0,550.0" fill="#a9592b" stroke="#70421a" stroke-width="1" stroke-linejoin="round"/>
<polygon points="627.0,543.0 639.0,543.0 650.0,772.0 640.0,772.0" fill="#f2d29b" stroke="#70421a" stroke-width="1.4" stroke-linejoin="round"/>
<polygon points="639.0,543.0 642.0,543.0 653.0,770.0 650.0,772.0" fill="#caa06a" stroke="#70421a" stroke-width="1.2" stroke-linejoin="round"/>
<polygon points="627.0,543.0 642.0,543.0 642.0,554.0 627.0,554.0" fill="#a9592b" stroke="#70421a" stroke-width="1" stroke-linejoin="round"/>
<polygon points="807.0,546.0 819.0,546.0 821.0,767.0 811.0,767.0" fill="#f2d29b" stroke="#70421a" stroke-width="1.4" stroke-linejoin="round"/>
<polygon points="819.0,546.0 821.0,546.0 823.0,765.0 821.0,767.0" fill="#caa06a" stroke="#70421a" stroke-width="1.2" stroke-linejoin="round"/>
<polygon points="807.0,546.0 821.0,546.0 821.0,557.0 807.0,557.0" fill="#a9592b" stroke="#70421a" stroke-width="1" stroke-linejoin="round"/>
<clipPath id="lw"><polygon points="942,548 980,549 980,762 942,657"/></clipPath>
<polygon points="942.0,548.0 980.0,549.0 980.0,762.0 942.0,657.0" fill="#efcf98" stroke="#70421a" stroke-width="1" stroke-linejoin="round"/>
<g clip-path="url(#lw)">
<line x1="942.0" y1="488.0" x2="980.0" y2="538.0" stroke="#b8894f" stroke-width="0.9"/>
<line x1="942.0" y1="493.0" x2="980.0" y2="543.0" stroke="#b8894f" stroke-width="0.9"/>
<line x1="942.0" y1="498.0" x2="980.0" y2="548.0" stroke="#b8894f" stroke-width="0.9"/>
<line x1="942.0" y1="503.0" x2="980.0" y2="553.0" stroke="#b8894f" stroke-width="0.9"/>
<line x1="942.0" y1="508.0" x2="980.0" y2="558.0" stroke="#b8894f" stroke-width="0.9"/>
<line x1="942.0" y1="513.0" x2="980.0" y2="563.0" stroke="#b8894f" stroke-width="0.9"/>
<line x1="942.0" y1="518.0" x2="980.0" y2="568.0" stroke="#b8894f" stroke-width="0.9"/>
<line x1="942.0" y1="523.0" x2="980.0" y2="573.0" stroke="#b8894f" stroke-width="0.9"/>
<line x1="942.0" y1="528.0" x2="980.0" y2="578.0" stroke="#b8894f" stroke-width="0.9"/>
<line x1="942.0" y1="533.0" x2="980.0" y2="583.0" stroke="#b8894f" stroke-width="0.9"/>
<line x1="942.0" y1="538.0" x2="980.0" y2="588.0" stroke="#b8894f" stroke-width="0.9"/>
<line x1="942.0" y1="543.0" x2="980.0" y2="593.0" stroke="#b8894f" stroke-width="0.9"/>
<line x1="942.0" y1="548.0" x2="980.0" y2="598.0" stroke="#b8894f" stroke-width="0.9"/>
<line x1="942.0" y1="553.0" x2="980.0" y2="603.0" stroke="#b8894f" stroke-width="0.9"/>
<line x1="942.0" y1="558.0" x2="980.0" y2="608.0" stroke="#b8894f" stroke-width="0.9"/>
<line x1="942.0" y1="563.0" x2="980.0" y2="613.0" stroke="#b8894f" stroke-width="0.9"/>
<line x1="942.0" y1="568.0" x2="980.0" y2="618.0" stroke="#b8894f" stroke-width="0.9"/>
<line x1="942.0" y1="573.0" x2="980.0" y2="623.0" stroke="#b8894f" stroke-width="0.9"/>
<line x1="942.0" y1="578.0" x2="980.0" y2="628.0" stroke="#b8894f" stroke-width="0.9"/>
<line x1="942.0" y1="583.0" x2="980.0" y2="633.0" stroke="#b8894f" stroke-width="0.9"/>
<line x1="942.0" y1="588.0" x2="980.0" y2="638.0" stroke="#b8894f" stroke-width="0.9"/>
<line x1="942.0" y1="593.0" x2="980.0" y2="643.0" stroke="#b8894f" stroke-width="0.9"/>
<line x1="942.0" y1="598.0" x2="980.0" y2="648.0" stroke="#b8894f" stroke-width="0.9"/>
<line x1="942.0" y1="603.0" x2="980.0" y2="653.0" stroke="#b8894f" stroke-width="0.9"/>
<line x1="942.0" y1="608.0" x2="980.0" y2="658.0" stroke="#b8894f" stroke-width="0.9"/>
<line x1="942.0" y1="613.0" x2="980.0" y2="663.0" stroke="#b8894f" stroke-width="0.9"/>
<line x1="942.0" y1="618.0" x2="980.0" y2="668.0" stroke="#b8894f" stroke-width="0.9"/>
<line x1="942.0" y1="623.0" x2="980.0" y2="673.0" stroke="#b8894f" stroke-width="0.9"/>
<line x1="942.0" y1="628.0" x2="980.0" y2="678.0" stroke="#b8894f" stroke-width="0.9"/>
<line x1="942.0" y1="633.0" x2="980.0" y2="683.0" stroke="#b8894f" stroke-width="0.9"/>
<line x1="942.0" y1="638.0" x2="980.0" y2="688.0" stroke="#b8894f" stroke-width="0.9"/>
<line x1="942.0" y1="643.0" x2="980.0" y2="693.0" stroke="#b8894f" stroke-width="0.9"/>
<line x1="942.0" y1="648.0" x2="980.0" y2="698.0" stroke="#b8894f" stroke-width="0.9"/>
<line x1="942.0" y1="653.0" x2="980.0" y2="703.0" stroke="#b8894f" stroke-width="0.9"/>
<line x1="942.0" y1="658.0" x2="980.0" y2="708.0" stroke="#b8894f" stroke-width="0.9"/>
<line x1="942.0" y1="663.0" x2="980.0" y2="713.0" stroke="#b8894f" stroke-width="0.9"/>
<line x1="942.0" y1="668.0" x2="980.0" y2="718.0" stroke="#b8894f" stroke-width="0.9"/>
<line x1="942.0" y1="673.0" x2="980.0" y2="723.0" stroke="#b8894f" stroke-width="0.9"/>
<line x1="942.0" y1="678.0" x2="980.0" y2="728.0" stroke="#b8894f" stroke-width="0.9"/>
<line x1="942.0" y1="683.0" x2="980.0" y2="733.0" stroke="#b8894f" stroke-width="0.9"/>
<line x1="942.0" y1="688.0" x2="980.0" y2="738.0" stroke="#b8894f" stroke-width="0.9"/>
<line x1="942.0" y1="693.0" x2="980.0" y2="743.0" stroke="#b8894f" stroke-width="0.9"/>
<line x1="942.0" y1="698.0" x2="980.0" y2="748.0" stroke="#b8894f" stroke-width="0.9"/>
<line x1="942.0" y1="703.0" x2="980.0" y2="753.0" stroke="#b8894f" stroke-width="0.9"/>
<line x1="942.0" y1="708.0" x2="980.0" y2="758.0" stroke="#b8894f" stroke-width="0.9"/>
<line x1="942.0" y1="713.0" x2="980.0" y2="763.0" stroke="#b8894f" stroke-width="0.9"/>
<line x1="942.0" y1="718.0" x2="980.0" y2="768.0" stroke="#b8894f" stroke-width="0.9"/>
<line x1="942.0" y1="723.0" x2="980.0" y2="773.0" stroke="#b8894f" stroke-width="0.9"/>
<line x1="942.0" y1="728.0" x2="980.0" y2="778.0" stroke="#b8894f" stroke-width="0.9"/>
<line x1="942.0" y1="733.0" x2="980.0" y2="783.0" stroke="#b8894f" stroke-width="0.9"/>
<line x1="942.0" y1="738.0" x2="980.0" y2="788.0" stroke="#b8894f" stroke-width="0.9"/>
<line x1="942.0" y1="743.0" x2="980.0" y2="793.0" stroke="#b8894f" stroke-width="0.9"/>
<line x1="942.0" y1="748.0" x2="980.0" y2="798.0" stroke="#b8894f" stroke-width="0.9"/>
<line x1="942.0" y1="753.0" x2="980.0" y2="803.0" stroke="#b8894f" stroke-width="0.9"/>
<line x1="942.0" y1="758.0" x2="980.0" y2="808.0" stroke="#b8894f" stroke-width="0.9"/>
<line x1="942.0" y1="763.0" x2="980.0" y2="813.0" stroke="#b8894f" stroke-width="0.9"/>
<line x1="942.0" y1="768.0" x2="980.0" y2="818.0" stroke="#b8894f" stroke-width="0.9"/>
<line x1="942.0" y1="773.0" x2="980.0" y2="823.0" stroke="#b8894f" stroke-width="0.9"/>
<line x1="942.0" y1="778.0" x2="980.0" y2="828.0" stroke="#b8894f" stroke-width="0.9"/>
<line x1="942.0" y1="783.0" x2="980.0" y2="833.0" stroke="#b8894f" stroke-width="0.9"/>
<line x1="942.0" y1="788.0" x2="980.0" y2="838.0" stroke="#b8894f" stroke-width="0.9"/>
<line x1="942.0" y1="793.0" x2="980.0" y2="843.0" stroke="#b8894f" stroke-width="0.9"/>
</g>
<polygon points="980.0,548.0 1146.0,548.0 1146.0,758.0 980.0,762.0" fill="#f2d29b" stroke="#70421a" stroke-width="1.2" stroke-linejoin="round"/>
<polygon points="1146.0,569.0 1294.0,569.0 1282.0,752.0 1140.0,756.0" fill="#c3c3c6"/>
<polygon points="1156.0,569.0 1210.0,569.0 1210.0,653.0 1156.0,652.0" fill="#f2d29b" stroke="#70421a" stroke-width="1" stroke-linejoin="round"/>
<clipPath id="rw"><polygon points="1210,569 1284,569 1271,702 1210,653"/></clipPath>
<polygon points="1210.0,569.0 1284.0,569.0 1271.0,702.0 1210.0,653.0" fill="#efcf98" stroke="#70421a" stroke-width="1" stroke-linejoin="round"/>
<g clip-path="url(#rw)">
<line x1="1210.0" y1="546.5" x2="1284.0" y2="576.5" stroke="#b8894f" stroke-width="0.9"/>
<line x1="1210.0" y1="554.0" x2="1284.0" y2="584.0" stroke="#b8894f" stroke-width="0.9"/>
<line x1="1210.0" y1="561.5" x2="1284.0" y2="591.5" stroke="#b8894f" stroke-width="0.9"/>
<line x1="1210.0" y1="569.0" x2="1284.0" y2="599.0" stroke="#b8894f" stroke-width="0.9"/>
<line x1="1210.0" y1="576.5" x2="1284.0" y2="606.5" stroke="#b8894f" stroke-width="0.9"/>
<line x1="1210.0" y1="584.0" x2="1284.0" y2="614.0" stroke="#b8894f" stroke-width="0.9"/>
<line x1="1210.0" y1="591.5" x2="1284.0" y2="621.5" stroke="#b8894f" stroke-width="0.9"/>
<line x1="1210.0" y1="599.0" x2="1284.0" y2="629.0" stroke="#b8894f" stroke-width="0.9"/>
<line x1="1210.0" y1="606.5" x2="1284.0" y2="636.5" stroke="#b8894f" stroke-width="0.9"/>
<line x1="1210.0" y1="614.0" x2="1284.0" y2="644.0" stroke="#b8894f" stroke-width="0.9"/>
<line x1="1210.0" y1="621.5" x2="1284.0" y2="651.5" stroke="#b8894f" stroke-width="0.9"/>
<line x1="1210.0" y1="629.0" x2="1284.0" y2="659.0" stroke="#b8894f" stroke-width="0.9"/>
<line x1="1210.0" y1="636.5" x2="1284.0" y2="666.5" stroke="#b8894f" stroke-width="0.9"/>
<line x1="1210.0" y1="644.0" x2="1284.0" y2="674.0" stroke="#b8894f" stroke-width="0.9"/>
<line x1="1210.0" y1="651.5" x2="1284.0" y2="681.5" stroke="#b8894f" stroke-width="0.9"/>
<line x1="1210.0" y1="659.0" x2="1284.0" y2="689.0" stroke="#b8894f" stroke-width="0.9"/>
<line x1="1210.0" y1="666.5" x2="1284.0" y2="696.5" stroke="#b8894f" stroke-width="0.9"/>
<line x1="1210.0" y1="674.0" x2="1284.0" y2="704.0" stroke="#b8894f" stroke-width="0.9"/>
<line x1="1210.0" y1="681.5" x2="1284.0" y2="711.5" stroke="#b8894f" stroke-width="0.9"/>
<line x1="1210.0" y1="689.0" x2="1284.0" y2="719.0" stroke="#b8894f" stroke-width="0.9"/>
<line x1="1210.0" y1="696.5" x2="1284.0" y2="726.5" stroke="#b8894f" stroke-width="0.9"/>
<line x1="1210.0" y1="704.0" x2="1284.0" y2="734.0" stroke="#b8894f" stroke-width="0.9"/>
<line x1="1210.0" y1="711.5" x2="1284.0" y2="741.5" stroke="#b8894f" stroke-width="0.9"/>
</g>
<polygon points="1140.0,548.0 1345.0,552.0 1345.0,560.0 1140.0,560.0" fill="#f2d29b"/>
<polygon points="1146.0,557.0 1296.0,557.0 1296.0,569.0 1146.0,569.0" fill="#f2d29b" stroke="#70421a" stroke-width="1" stroke-linejoin="round"/>
<polygon points="1147.0,569.0 1157.0,569.0 1148.0,756.0 1140.0,756.0" fill="#f2d29b" stroke="#70421a" stroke-width="1.2" stroke-linejoin="round"/>
<polygon points="1281.0,569.0 1294.0,569.0 1282.0,752.0 1267.0,752.0" fill="#f2d29b" stroke="#70421a" stroke-width="1.2" stroke-linejoin="round"/>
<polygon points="1294.0,557.0 1342.0,557.0 1327.0,751.0 1282.0,752.0" fill="#f2d29b" stroke="#70421a" stroke-width="1.2" stroke-linejoin="round"/>
<polygon points="1342.0,558.0 1352.0,558.0 1339.0,751.0 1326.0,751.0" fill="#f2d29b" stroke="#70421a" stroke-width="1.2" stroke-linejoin="round"/>
<polygon points="1342.0,558.0 1352.0,558.0 1352.0,568.0 1342.0,568.0" fill="#a9592b" stroke="#70421a" stroke-width="1" stroke-linejoin="round"/>
<polygon points="980.0,548.0 993.0,548.0 993.0,762.0 980.0,762.0" fill="#f2d29b" stroke="#70421a" stroke-width="1.2" stroke-linejoin="round"/>
<polygon points="980.0,549.0 993.0,549.0 993.0,561.0 980.0,561.0" fill="#a9592b" stroke="#70421a" stroke-width="1" stroke-linejoin="round"/>
<line x1="994.0" y1="570.6" x2="1145.0" y2="569.1" stroke="#96652f" stroke-width="1.1"/>
<line x1="1295.2" y1="570.6" x2="1338.9" y2="569.6" stroke="#96652f" stroke-width="1.1"/>
<line x1="1157.0" y1="570.6" x2="1209.0" y2="570.1" stroke="#96652f" stroke-width="1.1"/>
<line x1="994.0" y1="581.2" x2="1145.0" y2="579.7" stroke="#96652f" stroke-width="1.1"/>
<line x1="1294.5" y1="581.2" x2="1338.1" y2="580.2" stroke="#96652f" stroke-width="1.1"/>
<line x1="1157.0" y1="581.2" x2="1209.0" y2="580.7" stroke="#96652f" stroke-width="1.1"/>
<line x1="994.0" y1="591.8" x2="1145.0" y2="590.3" stroke="#96652f" stroke-width="1.1"/>
<line x1="1293.9" y1="591.8" x2="1337.2" y2="590.8" stroke="#96652f" stroke-width="1.1"/>
<line x1="1157.0" y1="591.8" x2="1209.0" y2="591.3" stroke="#96652f" stroke-width="1.1"/>
<line x1="994.0" y1="602.4" x2="1145.0" y2="600.9" stroke="#96652f" stroke-width="1.1"/>
<line x1="1293.3" y1="602.4" x2="1336.4" y2="601.4" stroke="#96652f" stroke-width="1.1"/>
<line x1="1157.0" y1="602.4" x2="1209.0" y2="601.9" stroke="#96652f" stroke-width="1.1"/>
<line x1="994.0" y1="613.0" x2="1145.0" y2="611.5" stroke="#96652f" stroke-width="1.1"/>
<line x1="1292.6" y1="613.0" x2="1335.5" y2="612.0" stroke="#96652f" stroke-width="1.1"/>
<line x1="1157.0" y1="613.0" x2="1209.0" y2="612.5" stroke="#96652f" stroke-width="1.1"/>
<line x1="994.0" y1="623.6" x2="1145.0" y2="622.1" stroke="#96652f" stroke-width="1.1"/>
<line x1="1292.0" y1="623.6" x2="1334.7" y2="622.6" stroke="#96652f" stroke-width="1.1"/>
<line x1="1157.0" y1="623.6" x2="1209.0" y2="623.1" stroke="#96652f" stroke-width="1.1"/>
<line x1="994.0" y1="634.2" x2="1145.0" y2="632.7" stroke="#96652f" stroke-width="1.1"/>
<line x1="1291.4" y1="634.2" x2="1333.8" y2="633.2" stroke="#96652f" stroke-width="1.1"/>
<line x1="1157.0" y1="634.2" x2="1209.0" y2="633.7" stroke="#96652f" stroke-width="1.1"/>
<line x1="994.0" y1="644.8" x2="1145.0" y2="643.3" stroke="#96652f" stroke-width="1.1"/>
<line x1="1290.7" y1="644.8" x2="1333.0" y2="643.8" stroke="#96652f" stroke-width="1.1"/>
<line x1="1157.0" y1="644.8" x2="1209.0" y2="644.3" stroke="#96652f" stroke-width="1.1"/>
<line x1="994.0" y1="655.4" x2="1145.0" y2="653.9" stroke="#96652f" stroke-width="1.1"/>
<line x1="1290.1" y1="655.4" x2="1332.1" y2="654.4" stroke="#96652f" stroke-width="1.1"/>
<line x1="994.0" y1="666.0" x2="1145.0" y2="664.5" stroke="#96652f" stroke-width="1.1"/>
<line x1="1289.5" y1="666.0" x2="1331.3" y2="665.0" stroke="#96652f" stroke-width="1.1"/>
<line x1="994.0" y1="676.6" x2="1145.0" y2="675.1" stroke="#96652f" stroke-width="1.1"/>
<line x1="1288.8" y1="676.6" x2="1330.4" y2="675.6" stroke="#96652f" stroke-width="1.1"/>
<line x1="994.0" y1="687.2" x2="1145.0" y2="685.7" stroke="#96652f" stroke-width="1.1"/>
<line x1="1288.2" y1="687.2" x2="1329.6" y2="686.2" stroke="#96652f" stroke-width="1.1"/>
<line x1="994.0" y1="697.8" x2="1145.0" y2="696.3" stroke="#96652f" stroke-width="1.1"/>
<line x1="1287.6" y1="697.8" x2="1328.7" y2="696.8" stroke="#96652f" stroke-width="1.1"/>
<line x1="994.0" y1="708.4" x2="1145.0" y2="706.9" stroke="#96652f" stroke-width="1.1"/>
<line x1="1286.9" y1="708.4" x2="1327.9" y2="707.4" stroke="#96652f" stroke-width="1.1"/>
<line x1="994.0" y1="719.0" x2="1145.0" y2="717.5" stroke="#96652f" stroke-width="1.1"/>
<line x1="1286.3" y1="719.0" x2="1327.0" y2="718.0" stroke="#96652f" stroke-width="1.1"/>
<line x1="994.0" y1="729.6" x2="1145.0" y2="728.1" stroke="#96652f" stroke-width="1.1"/>
<line x1="1285.6" y1="729.6" x2="1326.2" y2="728.6" stroke="#96652f" stroke-width="1.1"/>
<line x1="994.0" y1="740.2" x2="1145.0" y2="738.7" stroke="#96652f" stroke-width="1.1"/>
<line x1="1285.0" y1="740.2" x2="1325.3" y2="739.2" stroke="#96652f" stroke-width="1.1"/>
<line x1="994.0" y1="750.8" x2="1145.0" y2="749.3" stroke="#96652f" stroke-width="1.1"/>
<polygon points="1035.0,578.0 1109.0,578.0 1109.0,631.0 1035.0,631.0" fill="#f2d29b" stroke="#70421a" stroke-width="1.2" stroke-linejoin="round"/>
<polygon points="1046.0,589.0 1098.0,589.0 1098.0,621.0 1046.0,621.0" fill="#ecca92" stroke="#70421a" stroke-width="1.6" stroke-linejoin="round"/>
<line x1="1047.0" y1="599.5" x2="1097.0" y2="599.5" stroke="#a07345" stroke-width="0.8"/>
<line x1="1047.0" y1="610.0" x2="1097.0" y2="610.0" stroke="#a07345" stroke-width="0.8"/>
<polygon points="361.0,469.9 1238.0,490.0 1378.0,543.0 222.0,521.4 222.0,515.1 250.5,501.8 293.0,502.6 293.0,488.5 329.0,489.3 329.0,477.9 361.0,478.6" fill="#73380f"/>
<polygon points="222.0,515.1 1361.9,537.0 1378.0,543.0 222.0,521.4" fill="#72672f"/>
<polygon points="361.0,470.5 1238.4,490.5 1259.4,498.5 361.0,478.6" fill="#f1d49d" stroke="#8b4a1c" stroke-width="0.9" stroke-linejoin="round"/>
<polygon points="329.0,480.0 1265.0,500.7 1288.8,509.7 329.0,489.3" fill="#f1d49d" stroke="#8b4a1c" stroke-width="0.9" stroke-linejoin="round"/>
<polygon points="293.0,491.7 1297.2,512.9 1325.2,523.5 293.0,502.6" fill="#f1d49d" stroke="#8b4a1c" stroke-width="0.9" stroke-linejoin="round"/>
<polygon points="250.5,505.0 1333.6,526.7 1360.9,536.9 250.5,515.7" fill="#f1d49d" stroke="#8b4a1c" stroke-width="0.9" stroke-linejoin="round"/>
<line x1="201.0" y1="520.0" x2="365.0" y2="469.5" stroke="#6e360e" stroke-width="4.4"/>
<line x1="201.0" y1="520.0" x2="365.0" y2="469.5" stroke="#d9a77a" stroke-width="2.0"/>
<polygon points="282.9,525.0 428.1,473.3 426.8,469.6 281.1,520.1" fill="#e2b987" stroke="#6e360e" stroke-width="1.2" stroke-linejoin="round"/>
<line x1="282.3" y1="523.4" x2="427.6" y2="472.1" stroke="#9a5a28" stroke-width="1.2" stroke-dasharray="1.2 2.8"/>
<polygon points="360.0,526.4 483.7,474.6 482.1,470.9 358.0,521.6" fill="#e2b987" stroke="#6e360e" stroke-width="1.2" stroke-linejoin="round"/>
<line x1="359.3" y1="524.8" x2="483.2" y2="473.4" stroke="#9a5a28" stroke-width="1.2" stroke-dasharray="1.2 2.8"/>
<polygon points="440.2,527.8 541.7,475.8 539.9,472.3 437.8,523.1" fill="#e2b987" stroke="#6e360e" stroke-width="1.2" stroke-linejoin="round"/>
<line x1="439.4" y1="526.3" x2="541.1" y2="474.7" stroke="#9a5a28" stroke-width="1.2" stroke-dasharray="1.2 2.8"/>
<polygon points="517.4,529.1 597.7,477.0 595.5,473.6 514.6,524.7" fill="#e2b987" stroke="#6e360e" stroke-width="1.2" stroke-linejoin="round"/>
<line x1="516.5" y1="527.6" x2="597.0" y2="475.9" stroke="#9a5a28" stroke-width="1.2" stroke-dasharray="1.2 2.8"/>
<polygon points="592.7,530.3 652.5,478.1 649.9,475.1 589.3,526.3" fill="#e2b987" stroke="#6e360e" stroke-width="1.2" stroke-linejoin="round"/>
<line x1="591.6" y1="529.0" x2="651.7" y2="477.1" stroke="#9a5a28" stroke-width="1.2" stroke-dasharray="1.2 2.8"/>
<polygon points="670.1,531.3 709.0,479.1 705.8,476.6 665.9,528.2" fill="#e2b987" stroke="#6e360e" stroke-width="1.2" stroke-linejoin="round"/>
<line x1="668.7" y1="530.3" x2="708.0" y2="478.3" stroke="#9a5a28" stroke-width="1.2" stroke-dasharray="1.2 2.8"/>
<polygon points="743.4,532.0 762.8,479.8 759.0,478.4 738.6,530.2" fill="#e2b987" stroke="#6e360e" stroke-width="1.2" stroke-linejoin="round"/>
<line x1="741.8" y1="531.4" x2="761.5" y2="479.3" stroke="#9a5a28" stroke-width="1.2" stroke-dasharray="1.2 2.8"/>
<polygon points="818.6,532.5 818.0,480.3 814.0,480.3 813.4,532.5" fill="#e2b987" stroke="#6e360e" stroke-width="1.2" stroke-linejoin="round"/>
<line x1="816.9" y1="532.5" x2="816.7" y2="480.3" stroke="#9a5a28" stroke-width="1.2" stroke-dasharray="1.2 2.8"/>
<polygon points="890.4,533.0 870.9,480.9 867.2,482.2 885.6,534.7" fill="#e2b987" stroke="#6e360e" stroke-width="1.2" stroke-linejoin="round"/>
<line x1="888.8" y1="533.5" x2="869.7" y2="481.3" stroke="#9a5a28" stroke-width="1.2" stroke-dasharray="1.2 2.8"/>
<polygon points="960.1,533.6 922.4,481.6 919.2,483.9 955.9,536.7" fill="#e2b987" stroke="#6e360e" stroke-width="1.2" stroke-linejoin="round"/>
<line x1="958.7" y1="534.6" x2="921.4" y2="482.3" stroke="#9a5a28" stroke-width="1.2" stroke-dasharray="1.2 2.8"/>
<polygon points="1031.8,534.6 975.6,482.5 972.8,485.4 1028.2,538.4" fill="#e2b987" stroke="#6e360e" stroke-width="1.2" stroke-linejoin="round"/>
<line x1="1030.6" y1="535.8" x2="974.7" y2="483.5" stroke="#9a5a28" stroke-width="1.2" stroke-dasharray="1.2 2.8"/>
<polygon points="1101.5,535.7 1027.4,483.5 1025.1,486.8 1098.5,539.9" fill="#e2b987" stroke="#6e360e" stroke-width="1.2" stroke-linejoin="round"/>
<line x1="1100.5" y1="537.1" x2="1026.7" y2="484.6" stroke="#9a5a28" stroke-width="1.2" stroke-dasharray="1.2 2.8"/>
<polygon points="1169.3,536.8 1078.0,484.6 1076.0,488.0 1166.7,541.3" fill="#e2b987" stroke="#6e360e" stroke-width="1.2" stroke-linejoin="round"/>
<line x1="1168.5" y1="538.3" x2="1077.3" y2="485.7" stroke="#9a5a28" stroke-width="1.2" stroke-dasharray="1.2 2.8"/>
<polygon points="1239.1,538.0 1130.2,485.7 1128.5,489.3 1236.9,542.7" fill="#e2b987" stroke="#6e360e" stroke-width="1.2" stroke-linejoin="round"/>
<line x1="1238.4" y1="539.6" x2="1129.7" y2="486.9" stroke="#9a5a28" stroke-width="1.2" stroke-dasharray="1.2 2.8"/>
<polygon points="1305.0,539.2 1179.7,486.8 1178.1,490.5 1303.0,544.0" fill="#e2b987" stroke="#6e360e" stroke-width="1.2" stroke-linejoin="round"/>
<line x1="1304.4" y1="540.8" x2="1179.2" y2="488.0" stroke="#9a5a28" stroke-width="1.2" stroke-dasharray="1.2 2.8"/>
<line x1="1378.0" y1="543.0" x2="1238.0" y2="490.0" stroke="#6e360e" stroke-width="3.4"/>
<line x1="1377.0" y1="542.5" x2="1238.5" y2="490.5" stroke="#e6be8a" stroke-width="1.3"/>
<line x1="362.0" y1="470.5" x2="1238.0" y2="490.5" stroke="#6e360e" stroke-width="2.4"/>
<polygon points="200.0,521.0 1378.0,543.0 1378.0,556.0 200.0,534.5" fill="#f2d49c" stroke="#70421a" stroke-width="1.6" stroke-linejoin="round"/>

  </svg>
</div>
<div class="a" style="left:439.8px;top:152.8px;width:141.8px;height:69.5px;background:#353a40"></div>
<div class="a" style="left:442.5px;top:155.5px;width:136.5px;height:64px;border-radius:3px;background:#ffaa00;overflow:hidden">
  <div style="position:absolute;left:0;top:0;width:100%;height:28px;background:linear-gradient(#767e88,#5e656e 60%,#4e545c);border:1px solid #9ca3ab;border-bottom:none;border-radius:3px 3px 0 0"></div>
  <div style="position:absolute;left:0;bottom:0;width:100%;height:4px;background:linear-gradient(#ffaa00,#c0a070)"></div>
</div>
<div class="a" style="left:444px;top:185.2px;width:33px;height:30px;background:#ffc75a;border:1px solid #d08a20"></div>
<svg style="left:0;top:0" width="1" height="1">
<path d="M455.5,189.5 V206 L459.5,202.5 L463,210 L466,208.5 L462.5,201.5 L467.5,201Z" fill="#fff" stroke="#111" stroke-width="1.3"/>
<path d="M484.5,189.5 V211 M493,189.5 V211 M501.5,189.5 V211" stroke="#2a1a08" stroke-width="2"/>
<path d="M483,199.5 H505" stroke="#e82a10" stroke-width="1.4"/>
<circle cx="484.5" cy="199.5" r="1.8" fill="#e82a10"/><circle cx="503" cy="199.5" r="1.8" fill="#e82a10"/>
<path d="M517,189.5 H538 V202 H524 V211 H517Z" fill="#e8c888"/>
<path d="M517,211 V189.5 H538 M524,211 V202 H538" fill="none" stroke="#4a1a08" stroke-width="1.8"/>
<path d="M518,190 L527,209" stroke="#c83818" stroke-width="0.8"/>
<path d="M550,189.5 H571.5 V211 H550Z" fill="#e8c888"/>
<path d="M557.5,202 H571.5 V211 H557.5Z" fill="#18e818"/>
<path d="M550,211 V189.5 H571.5 M557.5,211 V202 H571.5" fill="none" stroke="#4a1a08" stroke-width="1.8"/>
<path d="M551,190 L570,210" stroke="#c83818" stroke-width="0.8"/>
</svg>

<div class="a" style="left:1464.6px;top:835.8px;width:276px;height:50px;background:#fff;border:1px solid #c8c8c8"></div>
<div class="a" style="left:1484.1px;top:840.8px;font-size:16.67px;line-height:1;white-space:nowrap;color:#3a3a3a;transform:scaleX(0.934);transform-origin:0 0;">Wybierz element(y) ( Zaznaczenie</div>
<div class="a" style="left:1484.1px;top:857.3px;font-size:16.67px;line-height:1;white-space:nowrap;color:#3a3a3a;transform:scaleX(0.917);transform-origin:0 0;">wielokrotne: Proszę nacisnąć i</div>
<div class="a" style="left:1484.1px;top:876.8px;font-size:16.67px;line-height:1;white-space:nowrap;color:#3a3a3a;transform:scaleX(0.932);transform-origin:0 0;">przytrzymać klawisz SHIFT )</div>
<div id="status" class="a"></div>
<div class="a" style="left:1259px;top:891px;width:121px;height:44px;border-radius:5px;background:#2f2f2f"></div><div class="a" style="left:259.1px;top:903.9px;font-size:19.86px;line-height:1;white-space:nowrap;color:#8c8c8c;transform:scaleX(0.954);transform-origin:0 0;">2208 x 1480</div>
<div class="a" style="left:412.2px;top:903.9px;font-size:19.86px;line-height:1;white-space:nowrap;color:#8c8c8c;transform:scaleX(0.918);transform-origin:0 0;">584 KB</div>
<div class="a" style="left:1275.9px;top:903.3px;font-size:20.29px;line-height:1;white-space:nowrap;color:#f0f0f0;transform:scaleX(0.920);transform-origin:0 0;">100%</div>
<svg style="left:0;top:0" width="1" height="1">
<g fill="none" stroke="#f0f0f0" stroke-width="1.5" stroke-linejoin="round" stroke-linecap="round">
<rect x="25.5" y="905" width="21" height="15.5" rx="3"/>
<path d="M26,915.5 H46"/>
<path d="M111,904.5 C107,904.5 105.5,909 107,912 C109,916 118.5,922.5 118.5,922.5 C118.5,922.5 128,916 130,912 C131.5,909 130,904.5 126,904.5 C122.5,904.5 119.5,907 118.5,909 C117.5,907 114.5,904.5 111,904.5Z"/>
<circle cx="179" cy="913" r="10.5"/>
<path d="M179,910.5 V918.5"/>
<path d="M849,906 V904 a2.5,2.5 0 0 1 2.5,-2.5 H853 M866,901.5 H868 a2.5,2.5 0 0 1 2.5,2.5 V906 M870.5,920 V922 a2.5,2.5 0 0 1 -2.5,2.5 H866 M853,924.5 H851.5 a2.5,2.5 0 0 1 -2.5,-2.5 V920"/>
<circle cx="859.7" cy="913" r="2.2"/>
<path d="M910,906 V904 a2.5,2.5 0 0 1 2.5,-2.5 H914 M927,901.5 H929 a2.5,2.5 0 0 1 2.5,2.5 V906 M931.5,920 V922 a2.5,2.5 0 0 1 -2.5,2.5 H927 M914,924.5 H912.5 a2.5,2.5 0 0 1 -2.5,-2.5 V920"/>
<path d="M914.5,908.5 H927 M914.5,913 H927 M914.5,917.5 H922"/>
<rect x="1218" y="903.5" width="22" height="18.5"/>
<path d="M1347,910.5 L1352.5,916 L1358,910.5" stroke-width="1.3"/>
<circle cx="1409.5" cy="911.5" r="8"/><path d="M1405.5,911.5 H1413.5 M1415.5,917.5 L1421.5,923.5"/>
<circle cx="1657.5" cy="911.5" r="8"/><path d="M1653.5,911.5 H1661.5 M1657.5,907.5 V915.5 M1663.5,917.5 L1669.5,923.5"/>
<path d="M1736,923 L1755,904 M1745,904 H1755 V914 M1736,913 V923 H1746"/>
</g>
<g fill="#f0f0f0"><circle cx="179" cy="907.8" r="1.1"/></g>
<g fill="none" stroke="#f0f0f0" stroke-width="1.5">
<path d="M1223,908 H1219.5 V911 M1235,908 H1238.5 V911 M1219.5,914.5 V917.5 H1223 M1238.5,914.5 V917.5 H1235" stroke-width="1.2"/>
</g>
<path d="M28,918 H44" stroke="#f0f0f0" stroke-width="2" stroke-dasharray="2 1.5"/>
<line x1="79" y1="890" x2="79" y2="935" stroke="#3e3e3e" stroke-width="1"/>
<line x1="1702" y1="890" x2="1702" y2="935" stroke="#3e3e3e" stroke-width="1"/>
<g fill="none" stroke="#8a8a8a" stroke-width="1.5">
<path d="M227.5,916.5 V909 a1.5,1.5 0 0 1 1.5,-1.5 H235 a1.5,1.5 0 0 1 1.5,1.5 V911"/>
<path d="M230.5,917.5 V911.5 a1.5,1.5 0 0 1 1.5,-1.5 H240.5 a1.5,1.5 0 0 1 1.5,1.5 V917.5 a1.5,1.5 0 0 1 -1.5,1.5 H232 a1.5,1.5 0 0 1 -1.5,-1.5Z"/>
<path d="M380.5,906 H391 L395,910 V920 H380.5Z"/>
<path d="M384,906 V910.5 H390 V906 M383.5,920 V915 H392 V920"/>
</g>
<line x1="1447" y1="913" x2="1624" y2="913" stroke="#9a9a9a" stroke-width="5" stroke-linecap="round"/>
<line x1="1447" y1="913" x2="1470" y2="913" stroke="#76b7ec" stroke-width="5" stroke-linecap="round"/>
<circle cx="1477.5" cy="913" r="11" fill="#454545"/>
<circle cx="1477.5" cy="913" r="6.5" fill="#76b7ec"/>
</svg>
<div id="strip" class="a"></div>
<div class="a" style="left:210px;top:946px;width:62px;height:7px;background:#eeebe8"></div>
<div class="a" style="left:272px;top:946px;width:2px;height:7px;background:#8a8a8a"></div>
</body></html>
